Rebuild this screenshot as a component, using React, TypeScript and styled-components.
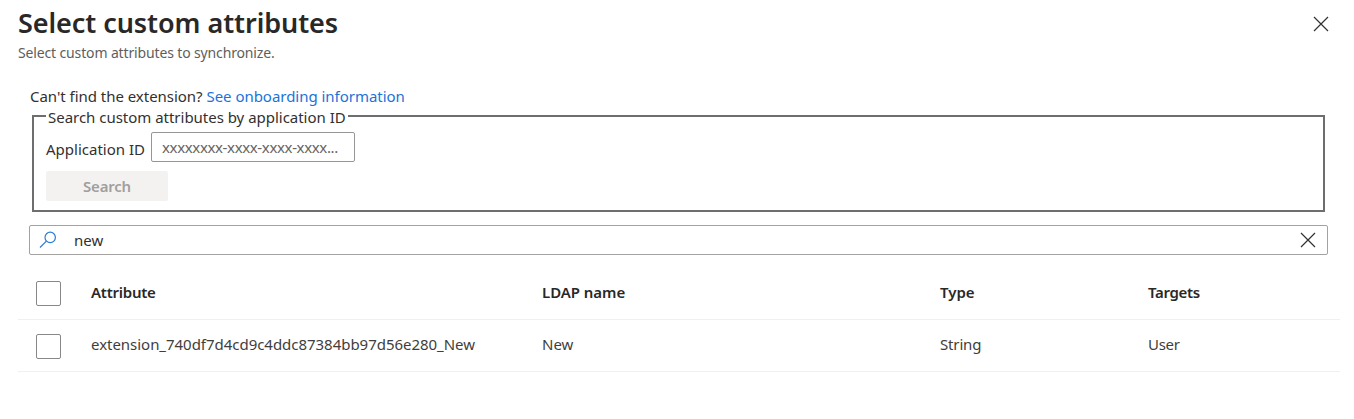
import React from "react";
import styled, { createGlobalStyle } from "styled-components";

const GlobalStyle = createGlobalStyle`
  * { box-sizing: border-box; }
  body {
    margin: 0;
    background: #fff;
    color: #323130;
    font-family: "Segoe UI", "Noto Sans", "Open Sans", sans-serif;
    font-size: 15px;
    line-height: 20px;
  }
`;

const Panel = styled.main`
  height: 419px;
  overflow: hidden;
`;

const Header = styled.header`
  display: flex;
  justify-content: space-between;
  height: 86px;
  padding: 5px 25px 0 18px;
`;

const Title = styled.h1`
  margin: 0;
  color: #292827;
  font-size: 27px;
  font-weight: 600;
  line-height: 36px;
  letter-spacing: -0.06px;
  white-space: nowrap;
`;

const Subtitle = styled.p`
  margin: 2px 0 0;
  color: #605e5c;
  font-size: 14px;
  line-height: 20px;
  letter-spacing: -0.14px;
`;

const IconButton = styled.button<{ $top?: number }>`
  display: flex;
  width: 16px;
  height: 16px;
  margin: ${(p) => p.$top ?? 0}px 0 0;
  padding: 0;
  border: 0;
  background: none;
`;

const Body = styled.div`
  padding: 0 26px 0 29px;
`;

const Hint = styled.p`
  margin: 0 0 0 1px;
  height: 21px;
  letter-spacing: -0.03px;
  white-space: nowrap;
`;

const Link = styled.a`
  color: #1a73d9;
  text-decoration: none;
`;

const SearchGroup = styled.fieldset`
  margin: 0 3px;
  height: 105px;
  padding: 0 0 0 12px;
  border: 2px solid #6e6e6e;
`;

const Legend = styled.legend`
  height: 18px;
  padding: 0 2px;
  letter-spacing: -0.02px;
  white-space: nowrap;
`;

const FieldRow = styled.div`
  display: flex;
  gap: 6px;
  height: 30px;
  margin-top: 7px;
`;

const FieldLabel = styled.label`
  width: 99px;
  padding-top: 7px;
  white-space: nowrap;
`;

const FieldInput = styled.input`
  width: 204px;
  height: 30px;
  padding: 0 10px 1px;
  border: 1px solid #979695;
  border-radius: 2px;
  color: #323130;
  font: inherit;
  letter-spacing: -0.36px;
  &::placeholder { color: #666462; opacity: 1; }
`;

const SearchButton = styled.button`
  display: block;
  width: 122px;
  height: 30px;
  margin-top: 9px;
  padding: 0;
  border: 0;
  border-radius: 2px;
  background: #f3f2f1;
  color: #a19f9d;
  font: inherit;
  font-weight: 600;
  letter-spacing: -0.2px;
`;

const FilterBox = styled.div`
  display: flex;
  align-items: center;
  height: 30px;
  margin-top: 13px;
  padding: 0 11px 0 9px;
  border: 1px solid #a3a2a1;
  border-radius: 2px;
`;

const FilterInput = styled.input`
  flex: 1;
  margin-left: 17px;
  padding: 0 0 1px;
  border: 0;
  outline: 0;
  background: none;
  color: #323130;
  font: inherit;
`;

const Table = styled.div`
  margin: 12px 14px 0 18px;
`;

const Row = styled.div<{ $head?: boolean }>`
  display: grid;
  grid-template-columns: 73px 451px 398px 208px 1fr;
  align-items: start;
  height: ${(p) => (p.$head ? 53 : 52)}px;
  padding-top: 14px;
  border-bottom: 1px solid #f1f0ef;
  color: ${(p) => (p.$head ? "#292827" : "#3f3e3d")};
  font-weight: ${(p) => (p.$head ? 600 : 400)};
`;

const Cell = styled.span<{ $spacing?: number; $head?: boolean }>`
  padding-top: ${(p) => (p.$head ? 1 : 0)}px;
  letter-spacing: ${(p) => p.$spacing ?? 0}px;
  white-space: nowrap;
`;

const Checkbox = styled.input`
  appearance: none;
  width: 25px;
  height: 25px;
  margin: 0 0 0 18px;
  border: 1px solid #8a8886;
  border-radius: 2px;
`;

const CrossIcon = () => (
  <svg width="16" height="16" viewBox="0 0 16 16" fill="none" stroke="#323130" strokeWidth="1.2">
    <path d="M1 1L15 15M15 1L1 15" />
  </svg>
);

const SearchIcon = () => (
  <svg width="18" height="18" viewBox="0 0 18 18" fill="none" stroke="#2b7cd3" strokeWidth="1.2">
    <circle cx="11.2" cy="6.4" r="5.2" />
    <path d="M7.4 10.1L1 16.5" />
  </svg>
);

export default function App() {
  return (
    <Panel>
      <GlobalStyle />
      <Header>
        <div>
          <Title>Select custom attributes</Title>
          <Subtitle>Select custom attributes to synchronize.</Subtitle>
        </div>
        <IconButton $top={11} aria-label="Close"><CrossIcon /></IconButton>
      </Header>
      <Body>
        <Hint>Can't find the extension? <Link>See onboarding information</Link></Hint>
        <SearchGroup>
          <Legend>Search custom attributes by application ID</Legend>
          <FieldRow>
            <FieldLabel htmlFor="app-id">Application ID</FieldLabel>
            <FieldInput id="app-id" placeholder="xxxxxxxx-xxxx-xxxx-xxxx..." />
          </FieldRow>
          <SearchButton disabled>Search</SearchButton>
        </SearchGroup>
        <FilterBox>
          <SearchIcon />
          <FilterInput defaultValue="new" aria-label="Filter attributes" />
          <IconButton aria-label="Clear"><CrossIcon /></IconButton>
        </FilterBox>
      </Body>
      <Table>
        <Row $head>
          <Checkbox type="checkbox" aria-label="Select all" />
          <Cell $head $spacing={-0.25}>Attribute</Cell>
          <Cell $head $spacing={-0.05}>LDAP name</Cell>
          <Cell $head>Type</Cell>
          <Cell $head $spacing={-0.35}>Targets</Cell>
        </Row>
        <Row>
          <Checkbox type="checkbox" aria-label="Select row" />
          <Cell $spacing={-0.03}>extension_740df7d4cd9c4ddc87384bb97d56e280_New</Cell>
          <Cell>New</Cell>
          <Cell $spacing={-0.15}>String</Cell>
          <Cell $spacing={-0.3}>User</Cell>
        </Row>
      </Table>
    </Panel>
  );
}
